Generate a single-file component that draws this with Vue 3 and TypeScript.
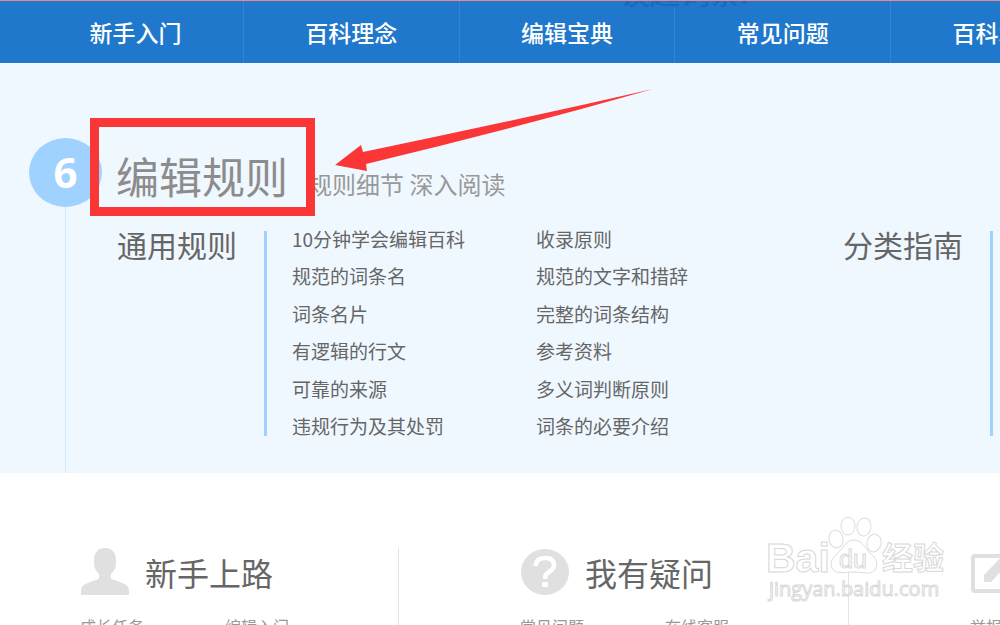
<script setup lang="ts">
const nav: string[] = ['新手入门', '百科理念', '编辑宝典', '常见问题', '百科术语']

const columns: string[][] = [
  ['10分钟学会编辑百科', '规范的词条名', '词条名片', '有逻辑的行文', '可靠的来源', '违规行为及其处罚'],
  ['收录原则', '规范的文字和措辞', '完整的词条结构', '参考资料', '多义词判断原则', '词条的必要介绍'],
]

interface Help {
  icon: 'user' | 'ask' | 'edit'
  title: string
  links: string[]
}

const help: Help[] = [
  { icon: 'user', title: '新手上路', links: ['成长任务', '编辑入门'] },
  { icon: 'ask', title: '我有疑问', links: ['常见问题', '在线客服'] },
  { icon: 'edit', title: '投诉建议', links: ['举报不良信息', '未通过词条申诉'] },
]
</script>

<template>
  <div class="page">
    <header class="bar">
      <div class="ghost" aria-hidden="true">谈起词条.</div>
      <nav class="nav">
        <a v-for="n in nav" :key="n" href="#">{{ n }}</a>
      </nav>
    </header>

    <section class="rules">
      <div class="rail">
        <span class="num">6</span>
      </div>
      <div class="content">
        <div class="heading">
          <h1>编辑规则</h1>
          <p>规则细节 深入阅读</p>
          <div class="frame"></div>
          <svg class="arrow" width="320" height="84" viewBox="0 0 320 84" aria-hidden="true">
            <path d="M2 76 L28 56 L30 63 Q180 32 320 0 Q180 40 33 75 L34 82 Z" fill="#fb3636" />
          </svg>
        </div>
        <div class="groups">
          <h2>通用规则</h2>
          <div class="lists">
            <ul v-for="(c, i) in columns" :key="i">
              <li v-for="t in c" :key="t"><a href="#">{{ t }}</a></li>
            </ul>
          </div>
          <h2>分类指南</h2>
          <div class="lists"></div>
        </div>
      </div>
    </section>

    <footer class="help">
      <section v-for="h in help" :key="h.title" class="card">
        <div class="title">
          <svg v-if="h.icon === 'user'" width="50" height="48" viewBox="0 0 50 48" aria-hidden="true">
            <path d="M25 0C17 0 13.500 6 14 14C14 20 16 23 19 26C20 30 19 31 16 32C8 35 1 36 1 43V47H49V43C49 36 42 35 34 32C31 31 30 30 31 26C34 23 36 20 36 14C36.500 6 33 0 25 0Z" fill="#e0e0e0" />
          </svg>
          <svg v-else-if="h.icon === 'ask'" width="50" height="48" viewBox="0 0 50 48" aria-hidden="true">
            <ellipse cx="25" cy="24" rx="24" ry="23" fill="#e0e0e0" />
            <path d="M15.500 18Q16 10 25 10Q34 10 34 17Q34 21 29 24Q25 26 25 31" fill="none" stroke="#fff" stroke-width="4.500" />
            <rect x="22" y="34" width="6" height="5" rx="1" fill="#fff" />
          </svg>
          <svg v-else width="50" height="48" viewBox="0 0 50 48" aria-hidden="true">
            <path d="M34 8H5Q3 8 3 10V41Q3 43 5 43H42V30" fill="none" stroke="#e0e0e0" stroke-width="4" />
            <path d="M14 27L36 4L43 10L21 34L14 34Z" fill="#e0e0e0" />
          </svg>
          <h2>{{ h.title }}</h2>
        </div>
        <div class="links">
          <a v-for="l in h.links" :key="l" href="#">{{ l }}</a>
        </div>
      </section>
    </footer>

    <svg class="mark" width="190" height="96" viewBox="0 0 190 96" role="img" aria-label="Baidu 经验">
      <g fill="#fff" stroke="#dcdcdc" stroke-width="1">
        <ellipse cx="79" cy="28" rx="7" ry="9" transform="rotate(-10 79 28)" />
        <ellipse cx="91" cy="15" rx="7" ry="9" />
        <ellipse cx="107" cy="16" rx="7" ry="9" transform="rotate(8 107 16)" />
        <ellipse cx="117" cy="32" rx="7" ry="9" transform="rotate(12 117 32)" />
        <path d="M97 29C89 29 87 36 81 42C74 48 73 52 75 57C78 64 89 61 97 61C106 61 116 65 119 57C121 51 119 47 113 42C107 36 105 29 97 29Z" />
      </g>
      <g class="logo">
        <text class="bold" x="9" y="61" font-size="41">Bai</text>
        <text x="82" y="57" font-size="25">du</text>
        <text class="bold" x="125" y="58" font-size="31">经验</text>
        <text class="url" x="12" y="85" font-size="20">jingyan.baidu.com</text>
      </g>
    </svg>
  </div>
</template>

<style>
body {
  margin: 0;
  overflow: hidden;
}
</style>

<style scoped>
.page {
  position: relative;
  height: 100vh;
  overflow: hidden;
  background: #fff;
  color: #666;
  font-family: 'Noto Sans CJK SC', sans-serif;
}
a {
  color: inherit;
  text-decoration: none;
}
h1,
h2,
p,
ul {
  margin: 0;
  padding: 0;
  font-weight: 400;
  list-style: none;
  white-space: nowrap;
}
.bar {
  position: relative;
  overflow: hidden;
  border-top: 1px solid #ec8a90;
  background: #1f78cb;
}
.ghost {
  position: absolute;
  top: -26px;
  left: 62%;
  color: #1a69bb;
  font-size: 30px;
  line-height: 32px;
}
.nav {
  display: flex;
  padding-left: 28px;
}
.nav a {
  flex: 0 0 22.2%;
  box-sizing: border-box;
  border-right: 1px solid #3485d0;
  color: #fff;
  font-size: 23px;
  font-weight: 500;
  line-height: 62px;
  text-align: center;
  white-space: nowrap;
}
.rules {
  display: flex;
  padding-left: 29px;
  background: #f0f8ff;
}
.rail {
  display: flex;
  flex: none;
  flex-direction: column;
  align-items: center;
  width: 73px;
  padding-top: 75px;
}
.rail::after {
  flex: 1;
  width: 1px;
  background: #cfe8fd;
  content: '';
}
.num {
  width: 73px;
  height: 69px;
  border-radius: 50%;
  background: #9fd2fe;
  color: #fff;
  font: 700 42px/68px 'Open Sans', sans-serif;
  text-align: center;
}
.content {
  flex: 1;
  min-width: 0;
  padding: 84px 0 37px 14px;
}
.heading {
  position: relative;
  display: flex;
  align-items: baseline;
  gap: 20px;
  color: #999;
}
h1 {
  color: #8c8c8c;
  font-size: 43px;
  line-height: 56px;
}
.heading p {
  font-size: 24px;
}
.frame {
  position: absolute;
  top: -29px;
  left: -26px;
  box-sizing: border-box;
  width: 225px;
  height: 98px;
  border: 9px solid #fb3636;
}
.arrow {
  position: absolute;
  top: -58px;
  left: 217px;
}
.groups {
  display: flex;
  padding-top: 18px;
}
.groups h2 {
  flex: none;
  width: 147px;
  padding-left: 1px;
  font-size: 30px;
  line-height: 46px;
}
.lists {
  display: grid;
  flex: 0 0 578px;
  grid-template-columns: 244px 1fr;
  box-sizing: border-box;
  height: 205px;
  margin-top: 10px;
  padding-left: 25px;
  border-left: 3px solid #9fd2fe;
  font-size: 19px;
}
.lists ul {
  display: flex;
  flex-direction: column;
  justify-content: space-between;
  margin: -6px 0 -4px;
}
.lists li {
  line-height: 28px;
}
.help {
  display: flex;
  padding: 75px 0 0 80px;
}
.card {
  position: relative;
  flex: 0 0 440px;
  white-space: nowrap;
}
.card + .card {
  flex-basis: 450px;
}
.card::after {
  position: absolute;
  top: 0;
  right: 121px;
  width: 1px;
  height: 78px;
  background: #e4e4e4;
  content: '';
}
.title {
  display: flex;
  align-items: center;
  gap: 15px;
}
.title h2 {
  font-size: 32px;
  line-height: 48px;
}
.links {
  display: grid;
  grid-template-columns: 145px 1fr;
  padding-top: 18px;
  color: #999;
  font-size: 16px;
  line-height: 24px;
}
.mark {
  position: absolute;
  right: 53px;
  bottom: 18px;
}
.logo {
  fill: #fff;
  stroke: #d8d8d8;
  stroke-width: 1px;
  font-family: 'Liberation Sans', 'Noto Sans CJK SC', sans-serif;
  font-weight: 400;
}
.bold {
  font-weight: 700;
}
.url {
  font-family: 'Open Sans', sans-serif;
}
</style>
